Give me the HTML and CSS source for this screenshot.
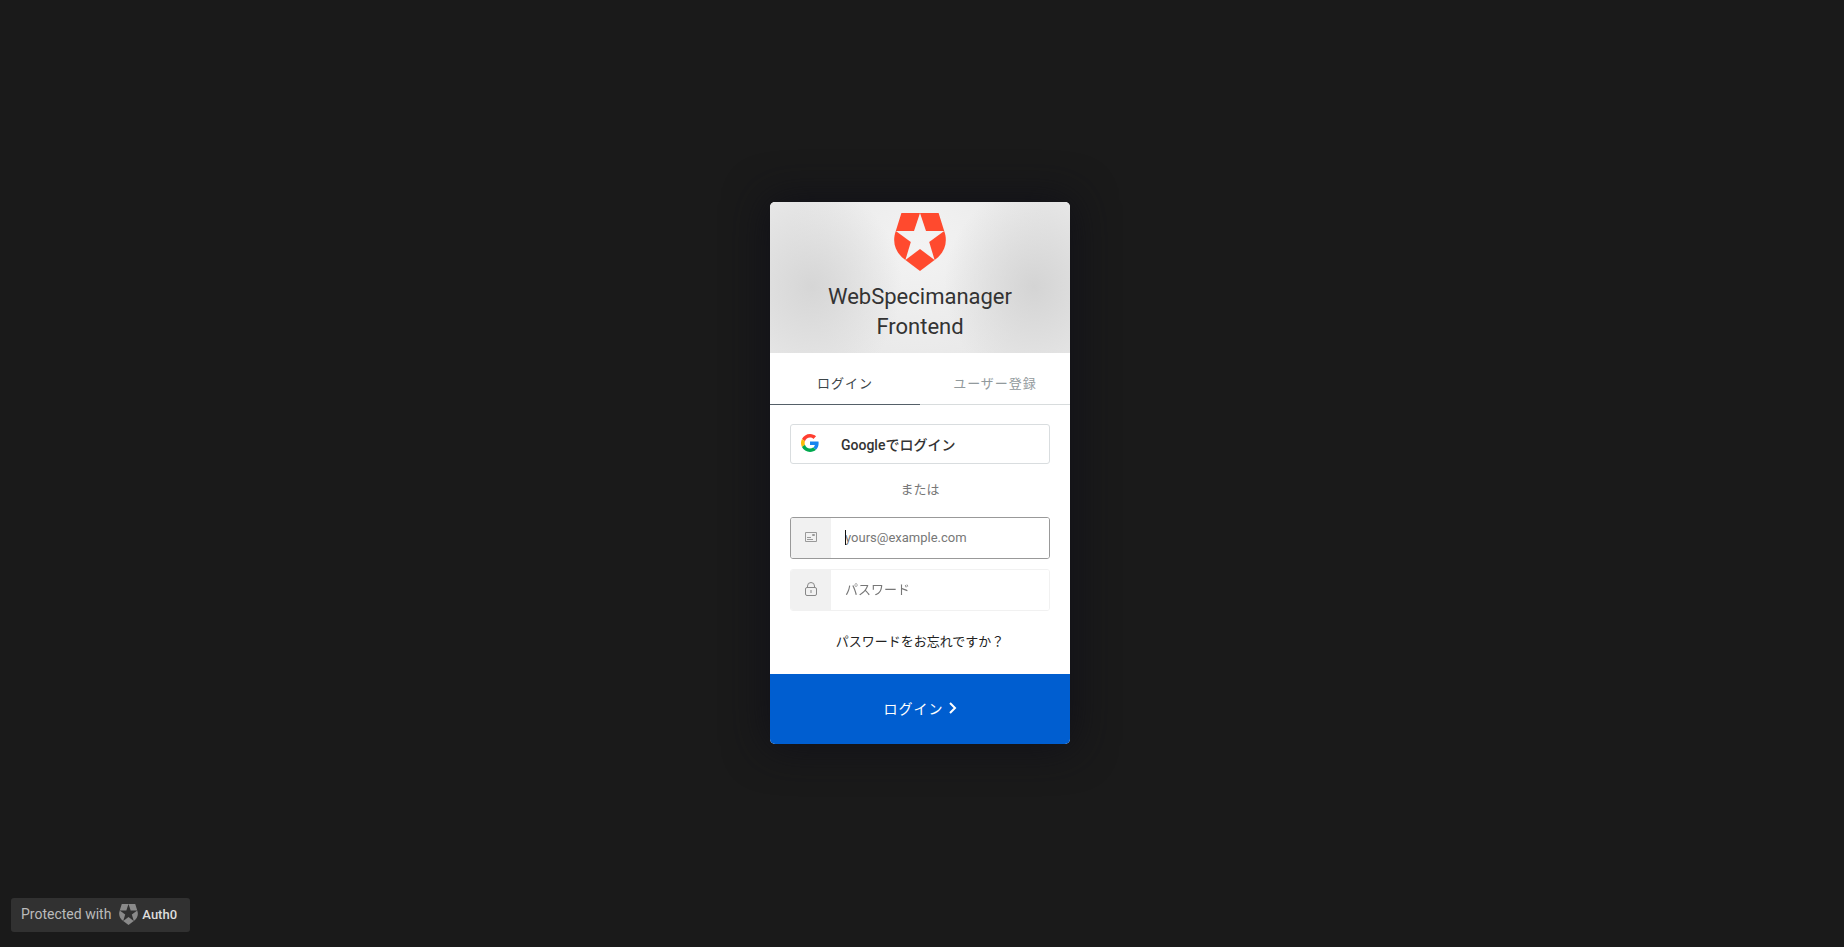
FILE: index.html
```html
<!DOCTYPE html>
<html lang="ja">
<head>
<meta charset="utf-8">
<meta name="viewport" content="width=device-width, initial-scale=1.0">

<title>WebSpecimanager Frontend</title>
<link rel="stylesheet" href="styles.css">
</head>
<body>
<svg class="defs" aria-hidden="true">
	<symbol id="shield" viewBox="0 0 52 58">
		<path d="M7.4 0H26l-6 18H1.8zM44.6 0H26l6 18h18.2z"/>
		<path d="M1.8 18L16.8 29 11.4 47C1.5 40-2.3 29.5 1.8 18z"/>
		<path d="M50.2 18L35.2 29 40.6 47C50.5 40 54.3 29.5 50.2 18z"/>
		<path d="M11.4 47L26 36l14.6 11L26 58z"/>
	</symbol>
</svg>

<main class="page">
	<form class="lock">
		<header class="lock-header">
			<svg class="lock-logo" aria-hidden="true"><use href="#shield"/></svg>
			<h1 class="lock-name">WebSpecimanager Frontend</h1>
		</header>

		<nav class="tabs">
			<a class="tab tab-current" href="#login">ログイン</a>
			<a class="tab" href="#signup">ユーザー登録</a>
		</nav>

		<div class="lock-content">
			<button class="social" type="button">
				<svg class="google" viewBox="0 0 48 48" aria-hidden="true">
					<path fill="#ff3e30" d="M24 9.5c3.54 0 6.71 1.22 9.21 3.6l6.85-6.85C35.9 2.38 30.47 0 24 0 14.62 0 6.51 5.38 2.56 13.22l7.98 6.19C12.43 13.72 17.74 9.5 24 9.5z"/>
					<path fill="#1785f0" d="M46.98 24.55c0-1.57-.15-3.09-.38-4.55H24v9.02h12.94c-.58 2.96-2.26 5.48-4.78 7.18l7.73 6c4.51-4.18 7.09-10.36 7.09-17.65z"/>
					<path fill="#fbbc05" d="M10.53 28.59c-.48-1.45-.76-2.99-.76-4.59s.27-3.14.76-4.59l-7.98-6.19C.92 16.46 0 20.12 0 24c0 3.88.92 7.54 2.56 10.78z"/>
					<path fill="#00a94f" d="M24 48c6.48 0 11.93-2.13 15.89-5.81l-7.73-6c-2.15 1.45-4.92 2.3-8.16 2.3-6.26 0-11.57-4.22-13.47-9.91l-7.98 6.19C6.51 42.62 14.62 48 24 48z"/>
				</svg>
				<span>Googleでログイン</span>
			</button>

			<p class="or">または</p>

			<div class="field">
				<label class="field-icon" for="email" aria-label="メールアドレス">
					<svg width="12" height="10" viewBox="0 0 12 10" fill="none" stroke="#999">
						<path d="M.5.500h11v9H.5zM2 5.500h4M2 7.500h6M7.500 2.500h2v1h-2z"/>
					</svg>
				</label>
				<input class="field-input" id="email" type="email" placeholder="yours@example.com" autofocus>
			</div>

			<div class="field">
				<label class="field-icon" for="password" aria-label="パスワード">
					<svg width="12" height="14" viewBox="0 0 12 14" fill="none" stroke="#888">
						<path d="M2.5 5.5V4a3.5 3.5 0 0 1 7 0v1.5"/>
						<rect x=".5" y="5.5" width="11" height="8" rx="1.5"/>
						<path d="M6 8v3"/>
					</svg>
				</label>
				<input class="field-input" id="password" type="password" placeholder="パスワード">
			</div>

			<a class="forgot" href="#reset">パスワードをお忘れですか？</a>
		</div>

		<button class="submit" type="submit">
			<span>ログイン</span>
			<svg width="8" height="12" viewBox="0 0 8 12" fill="none" stroke="#fff" stroke-width="2" aria-hidden="true">
				<path d="M1 1l5 5-5 5"/>
			</svg>
		</button>
	</form>
</main>

<a class="badge" href="#auth0">
	<span>Protected with</span>
	<svg class="badge-logo" aria-hidden="true"><use href="#shield"/></svg>
	<strong class="badge-name">Auth0</strong>
</a>
</body>
</html>
```
FILE: styles.css
```css
* {
	box-sizing: border-box;
}

body, h1, p {
	margin: 0;
}

body {
	background: #1a1a1a;
	color: #333;
	font-family: Roboto, "Noto Sans CJK JP", sans-serif;
	font-size: 13px;
}

a {
	color: inherit;
	text-decoration: none;
}

button, input {
	font: inherit;
	color: inherit;
}

.defs {
	display: none;
}

.page {
	display: flex;
	align-items: center;
	justify-content: center;
	min-height: 100vh;
	padding: 0 4px 1px 0;
}

/* login box */
.lock {
	width: 300px;
	border-radius: 5px;
	overflow: hidden;
	background: #fff;
	box-shadow: 0 0 40px 4px #111118;
}

.lock-header {
	padding: 11px 40px;
	text-align: center;
	background:
		radial-gradient(ellipse 90px 100px at 14% 56%, #d6d6d6, rgba(214,214,214,0)),
		radial-gradient(ellipse 90px 100px at 88% 56%, #d4d4d4, rgba(212,212,212,0)),
		radial-gradient(ellipse 130px 130px at 50% 30%, #f3f3f3, #e8e8e8);
}

.lock-logo {
	display: block;
	width: 52px;
	height: 58px;
	margin: 0 auto 11px;
	fill: #ff4a2e;
}

.lock-name {
	font-size: 22px;
	font-weight: 400;
	line-height: 30px;
}

.tabs {
	display: flex;
	padding-top: 10px;
}

.tab {
	flex: 1;
	height: 42px;
	line-height: 42px;
	border-bottom: 1px solid #d8dcdd;
	text-align: center;
	letter-spacing: 1px;
	color: #929a9d;
}

.tab-current {
	border-color: #556068;
	color: #3c4549;
}

.lock-content {
	display: flex;
	flex-direction: column;
	padding: 19px 20px 21px;
}

.social {
	display: flex;
	align-items: center;
	height: 40px;
	padding: 0 10px;
	border: 1px solid #d9dddf;
	border-radius: 3px;
	background: #fff;
	font-size: 14px;
	font-weight: 500;
}

.google {
	width: 18px;
	height: 18px;
	margin: 0 22px 2px 0;
}

.or {
	margin: 15px 0 17px;
	line-height: 21px;
	text-align: center;
	color: #777;
}

.field {
	position: relative;
	display: flex;
	height: 42px;
	margin-bottom: 10px;
	border: 1px solid #f1f1f1;
	border-radius: 3px;
	overflow: hidden;
}

.field:focus-within {
	border-color: #999;
}

/* steady caret instead of the blinking one */
.field:focus-within::after {
	content: "";
	position: absolute;
	top: 12px;
	left: 54px;
	width: 1px;
	height: 15px;
	background: #111;
}

.field-icon {
	display: flex;
	align-items: center;
	justify-content: center;
	width: 40px;
	padding-bottom: 2px;
	background: #f1f1f1;
}

.field-input {
	flex: 1;
	min-width: 0;
	padding: 0 14px 2px;
	border: 0;
	outline: 0;
	background: #fff;
	caret-color: transparent;
}

.field-input::placeholder {
	color: #777;
}

.forgot {
	margin-top: 10px;
	line-height: 22px;
	text-align: center;
	color: #222;
}

.submit {
	display: flex;
	align-items: center;
	justify-content: center;
	gap: 5px;
	width: 100%;
	height: 70px;
	padding: 0 0 2px;
	border: 0;
	background: #005ed0;
	color: #fff;
	font-size: 14px;
	letter-spacing: 1px;
}

/* bottom left badge */
.badge {
	position: fixed;
	left: 11px;
	bottom: 15px;
	display: flex;
	align-items: center;
	height: 34px;
	padding: 0 13px 2px 10px;
	border-radius: 3px;
	background: #313131;
	color: #bbb;
	font-size: 14px;
}

.badge-logo {
	width: 19px;
	height: 21px;
	margin: 0 4px 0 8px;
	fill: #8a8a8a;
}

.badge-name {
	font-size: 13px;
	font-weight: 500;
	color: #ddd;
}
```
